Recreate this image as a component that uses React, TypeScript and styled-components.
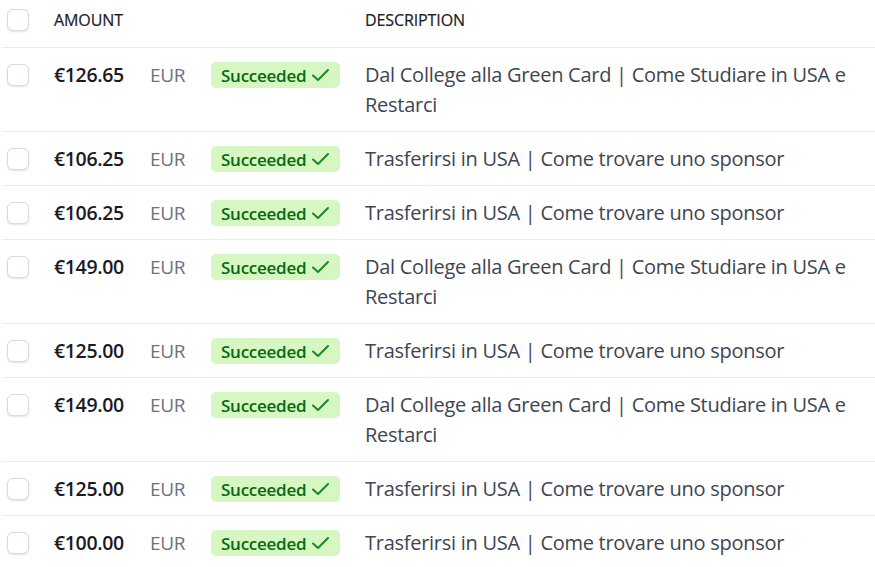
import React from "react";
import styled, { createGlobalStyle } from "styled-components";

const GlobalStyle = createGlobalStyle`
  html, body {
    margin: 0;
    padding: 0;
    background: #ffffff;
  }
  body {
    font-family: "Open Sans", "Noto Sans", sans-serif;
    color: #414552;
  }
`;

const Table = styled.div`
  margin-left: 2px;
  width: 873px;
`;

const Row = styled.div<{ $header?: boolean }>`
  display: grid;
  grid-template-columns: 52px 96px 61px 154px 1fr;
  align-items: start;
  padding: ${({ $header }) => ($header ? "5px 0 12px" : "12px 0 11px")};
  border-bottom: 1px solid #ebeef1;
`;

const CheckCell = styled.div`
  height: 30px;
  display: flex;
  align-items: center;
  padding-left: 5px;
`;

const Checkbox = styled.span`
  width: 22px;
  height: 22px;
  box-sizing: border-box;
  border-radius: 6px;
  border: 1px solid #d5dbe1;
  background: #fff;
  box-shadow: 0 1px 2px rgba(0, 0, 0, 0.12);
`;

const HeadLabel = styled.div`
  font-size: 16px;
  font-weight: 500;
  color: #1a1b25;
  line-height: 30px;
  letter-spacing: -0.1px;
  -webkit-text-stroke: 0.2px #1a1b25;
`;

const Amount = styled.div`
  font-size: 19.5px;
  font-weight: 600;
  color: #1a1b25;
  line-height: 30px;
  letter-spacing: -0.35px;
`;

const Currency = styled.div`
  font-size: 19px;
  color: #6a7383;
  line-height: 30px;
  letter-spacing: -0.3px;
`;

const BadgeCell = styled.div`
  height: 30px;
  display: flex;
  align-items: center;
`;

const Badge = styled.span`
  display: inline-flex;
  align-items: center;
  gap: 5px;
  height: 26px;
  padding: 0 10px 0 10px;
  box-sizing: border-box;
  border-radius: 5px;
  background: #d7f7c2;
  color: #05690d;
  font-size: 17px;
  font-weight: 600;
  letter-spacing: -0.25px;
`;

const Description = styled.div`
  font-size: 20px;
  color: #414552;
  line-height: 30px;
  letter-spacing: -0.27px;
  padding-right: 14px;
`;

const Check = () => (
  <svg width="19" height="16" viewBox="0 0 19 16" fill="none">
    <path
      d="M2 8.5 L7 13 L17 3"
      stroke="#1a8a1f"
      strokeWidth="2"
      strokeLinecap="round"
      strokeLinejoin="round"
    />
  </svg>
);

const LONG = "Dal College alla Green Card | Come Studiare in USA e Restarci";
const SHORT = "Trasferirsi in USA | Come trovare uno sponsor";

const payments = [
  { amount: "€126.65", desc: LONG },
  { amount: "€106.25", desc: SHORT },
  { amount: "€106.25", desc: SHORT },
  { amount: "€149.00", desc: LONG },
  { amount: "€125.00", desc: SHORT },
  { amount: "€149.00", desc: LONG },
  { amount: "€125.00", desc: SHORT },
  { amount: "€100.00", desc: SHORT },
];

export default function App() {
  return (
    <Table>
      <GlobalStyle />
      <Row $header>
        <CheckCell>
          <Checkbox />
        </CheckCell>
        <HeadLabel>AMOUNT</HeadLabel>
        <div />
        <div />
        <HeadLabel>DESCRIPTION</HeadLabel>
      </Row>
      {payments.map((p, i) => (
        <Row key={i}>
          <CheckCell>
            <Checkbox />
          </CheckCell>
          <Amount>{p.amount}</Amount>
          <Currency>EUR</Currency>
          <BadgeCell>
            <Badge>
              Succeeded
              <Check />
            </Badge>
          </BadgeCell>
          <Description>{p.desc}</Description>
        </Row>
      ))}
    </Table>
  );
}
